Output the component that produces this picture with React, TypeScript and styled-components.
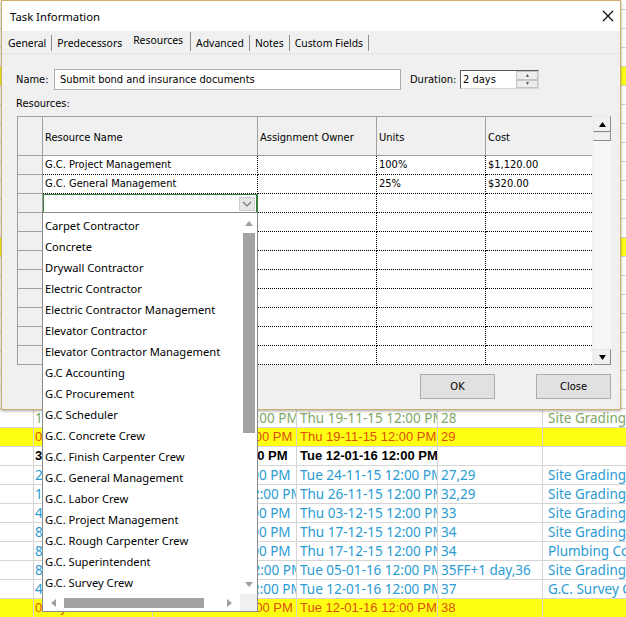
import React from 'react';
import styled, { createGlobalStyle, css } from 'styled-components';

const GlobalStyle = createGlobalStyle`
    html, body {
        margin: 0;
        padding: 0;
        background: #ffffff;
    }
    * {
        box-sizing: border-box;
    }
`;

const uiFont = `"Noto Sans", "Open Sans", sans-serif`;
const gridFont = `"DejaVu Sans Condensed", "DejaVu Sans", sans-serif`;

type Tone = 'plain' | 'green' | 'yellow' | 'bold' | 'blue';

interface SheetRowData {
    tone: Tone;
    cells: string[];
}

const sheetWidths = [34, 119, 144, 141, 105, 140];

// rows hidden behind the dialog: only their edges show
const hiddenRows: SheetRowData[] = Array.from({ length: 22 }, (_, i) => ({
    tone: i === 4 || i === 13 ? 'yellow' : 'plain',
    cells: ['', '', '', '', '', ''],
}));

const sheetRows: SheetRowData[] = [
    ...hiddenRows,
    { tone: 'green', cells: ['', '1 day', 'Thu 19-11-15 12:00 PM', 'Thu 19-11-15 12:00 PM', '28', 'Site Grading Crew'] },
    { tone: 'yellow', cells: ['', '0 days', 'Thu 19-11-15 12:00 PM', 'Thu 19-11-15 12:00 PM', '29', ''] },
    { tone: 'bold', cells: ['', '38 days', 'Fri 20-11-15 12:00 PM', 'Tue 12-01-16 12:00 PM', '', ''] },
    { tone: 'blue', cells: ['', '2 days', 'Fri 20-11-15 12:00 PM', 'Tue 24-11-15 12:00 PM', '27,29', 'Site Grading Crew'] },
    { tone: 'blue', cells: ['', '1 day', 'Wed 25-11-15 12:00 PM', 'Thu 26-11-15 12:00 PM', '32,29', 'Site Grading Crew'] },
    { tone: 'blue', cells: ['', '4 days', 'Fri 27-11-15 12:00 PM', 'Thu 03-12-15 12:00 PM', '33', 'Site Grading Crew'] },
    { tone: 'blue', cells: ['', '8 days', 'Fri 04-12-15 12:00 PM', 'Thu 17-12-15 12:00 PM', '34', 'Site Grading Crew'] },
    { tone: 'blue', cells: ['', '8 days', 'Fri 04-12-15 12:00 PM', 'Thu 17-12-15 12:00 PM', '34', 'Plumbing Contractor'] },
    { tone: 'blue', cells: ['', '8 days', 'Mon 21-12-15 12:00 PM', 'Tue 05-01-16 12:00 PM', '35FF+1 day,36', 'Site Grading Crew'] },
    { tone: 'blue', cells: ['', '4 days', 'Wed 06-01-16 12:00 PM', 'Tue 12-01-16 12:00 PM', '37', 'G.C. Survey Crew'] },
    { tone: 'yellow', cells: ['', '0 days', 'Tue 12-01-16 12:00 PM', 'Tue 12-01-16 12:00 PM', '38', ''] },
];

const tabs = ['General', 'Predecessors', 'Resources', 'Advanced', 'Notes', 'Custom Fields'];

const columns = ['', 'Resource Name', 'Assignment Owner', 'Units', 'Cost'];

const assignments = [
    ['G.C. Project Management', '', '100%', '$1,120.00'],
    ['G.C. General Management', '', '25%', '$320.00'],
];

const resourceOptions = [
    'Carpet Contractor',
    'Concrete',
    'Drywall Contractor',
    'Electric Contractor',
    'Electric Contractor Management',
    'Elevator Contractor',
    'Elevator Contractor Management',
    'G.C Accounting',
    'G.C Procurement',
    'G.C Scheduler',
    'G.C. Concrete Crew',
    'G.C. Finish Carpenter Crew',
    'G.C. General Management',
    'G.C. Labor Crew',
    'G.C. Project Management',
    'G.C. Rough Carpenter Crew',
    'G.C. Superintendent',
    'G.C. Survey Crew',
];

const Arrow = ({ dir, color = '#000', size = 7 }: { dir: 'up' | 'down' | 'left' | 'right'; color?: string; size?: number }) => {
    const h = Math.ceil(size / 2) + 1;
    const points = {
        up: `0,${h} ${size},${h} ${size / 2},0`,
        down: `0,0 ${size},0 ${size / 2},${h}`,
        left: `${h},0 ${h},${size} 0,${size / 2}`,
        right: `0,0 0,${size} ${h},${size / 2}`,
    }[dir];
    const vertical = dir === 'up' || dir === 'down';
    return (
        <svg width={vertical ? size : h} height={vertical ? h : size}>
            <polygon points={points} fill={color} />
        </svg>
    );
};

export default function App() {
    const emptyRows = 11 - assignments.length - 1;
    return (
        <Page>
            <GlobalStyle />
            <Sheet>
                {sheetRows.map((row, r) => (
                    <SheetRow key={r} $tone={row.tone}>
                        {row.cells.map((text, c) => (
                            <SheetCell key={c} $width={sheetWidths[c]}>
                                {text}
                            </SheetCell>
                        ))}
                    </SheetRow>
                ))}
            </Sheet>

            <Dialog>
                <TitleBar>
                    <span>Task Information</span>
                    <svg width="12" height="12" viewBox="0 0 12 12">
                        <path d="M1 1 L11 11 M11 1 L1 11" stroke="#000" strokeWidth="1.1" />
                    </svg>
                </TitleBar>

                <TabStrip>
                    {tabs.map((tab, i) => (
                        <Tab key={tab} $active={tab === 'Resources'} $beforeActive={tabs[i + 1] === 'Resources'}>
                            {tab}
                        </Tab>
                    ))}
                </TabStrip>

                <Panel>
                    <FieldRow>
                        <Label $width={38}>Name:</Label>
                        <TextBox>Submit bond and insurance documents</TextBox>
                        <Label $width={50} $gap={9}>
                            Duration:
                        </Label>
                        <SpinBox>
                            <span>2 days</span>
                            <Spinner>
                                <SpinButton>
                                    <Arrow dir="up" size={3} color="#555" />
                                </SpinButton>
                                <SpinButton>
                                    <Arrow dir="down" size={3} color="#555" />
                                </SpinButton>
                            </Spinner>
                        </SpinBox>
                    </FieldRow>

                    <SectionLabel>Resources:</SectionLabel>

                    <GridArea>
                        <Grid>
                            {columns.map((title, i) => (
                                <HeaderCell key={i} $last={i === columns.length - 1}>
                                    {title}
                                </HeaderCell>
                            ))}
                            {assignments.map((row, r) => (
                                <React.Fragment key={r}>
                                    <RowHead />
                                    {row.map((text, c) => (
                                        <DataCell key={c} $last={c === row.length - 1}>
                                            {text}
                                        </DataCell>
                                    ))}
                                </React.Fragment>
                            ))}
                            <RowHead />
                            <ComboCell>
                                <ComboButton>
                                    <svg width="10" height="6" viewBox="0 0 10 6">
                                        <path d="M1 1 L5 5 L9 1" stroke="#777" strokeWidth="1.2" fill="none" />
                                    </svg>
                                </ComboButton>
                            </ComboCell>
                            <DataCell />
                            <DataCell />
                            <DataCell $last />
                            {Array.from({ length: emptyRows }, (_, r) => (
                                <React.Fragment key={`e${r}`}>
                                    <RowHead />
                                    <DataCell />
                                    <DataCell />
                                    <DataCell />
                                    <DataCell $last />
                                </React.Fragment>
                            ))}
                        </Grid>
                        <VScroll>
                            <ScrollButton>
                                <Arrow dir="up" size={7} />
                            </ScrollButton>
                            <ScrollNub />
                            <ScrollTrack />
                            <ScrollButton>
                                <Arrow dir="down" size={7} />
                            </ScrollButton>
                        </VScroll>
                    </GridArea>

                    <ButtonRow>
                        <Button>OK</Button>
                        <Button>Close</Button>
                    </ButtonRow>
                </Panel>
            </Dialog>

            <DropList>
                <OptionList>
                    {resourceOptions.map((name) => (
                        <Option key={name}>{name}</Option>
                    ))}
                </OptionList>
                <ListVScroll>
                    <ListArrow $h={20}>
                        <Arrow dir="up" size={8} color="#a0a0a0" />
                    </ListArrow>
                    <ListThumbV />
                    <Spacer />
                    <ListArrow $h={20}>
                        <Arrow dir="down" size={8} color="#a0a0a0" />
                    </ListArrow>
                </ListVScroll>
                <ListHScroll>
                    <ListArrow $w={21}>
                        <Arrow dir="left" size={8} color="#a0a0a0" />
                    </ListArrow>
                    <ListThumbH />
                    <Spacer />
                    <ListArrow $w={22}>
                        <Arrow dir="right" size={8} color="#a0a0a0" />
                    </ListArrow>
                </ListHScroll>
                <ListCorner />
            </DropList>
        </Page>
    );
}

const Page = styled.div`
    position: relative;
    width: 626px;
    height: 617px;
    overflow: hidden;
    background: #ffffff;
`;

/* background project sheet */

const wideStart = css`
    & > div:nth-child(3) {
        padding-left: 0;
        text-indent: 1px;
    }
`;

const toneStyles = {
    plain: css`
        color: #000;
    `,
    green: css`
        color: #80a865;
        ${wideStart}
    `,
    yellow: css`
        background: #ffff14;
        color: #dd4e0a;
        font-family: "Liberation Sans", Arial, sans-serif;
        font-size: 13px;
    `,
    bold: css`
        color: #000;
        font-weight: bold;
        font-family: "Liberation Sans", Arial, sans-serif;
        font-size: 13px;
    `,
    blue: css`
        color: #2b9bd3;
        ${wideStart}
    `,
};

const Sheet = styled.div`
    display: flex;
    flex-direction: column;
    margin-top: -9px;
`;

const SheetRow = styled.div<{ $tone: Tone }>`
    display: flex;
    height: 19px;
    border-bottom: 1px solid #d5d5d5;
    font-family: ${uiFont};
    font-size: 13.5px;
    line-height: 18px;
    ${(props) => toneStyles[props.$tone]}
`;

const SheetCell = styled.div<{ $width: number }>`
    flex: none;
    width: ${(props) => props.$width}px;
    padding-left: 3px;
    overflow: hidden;
    white-space: nowrap;
    border-right: 1px solid #d5d5d5;
    &:first-child,
    &:nth-child(2) {
        padding-left: 1px;
    }
    &:last-child {
        padding-left: 5px;
    }
`;

/* dialog */

const Dialog = styled.div`
    position: absolute;
    left: 1px;
    top: 0;
    width: 620px;
    height: 410px;
    display: flex;
    flex-direction: column;
    background: #f0f0f0;
    border: 1px solid #cfae6a;
    box-shadow: 0 1px 3px rgba(0, 0, 0, 0.35);
    font-family: ${gridFont};
    font-size: 11px;
    color: #000;
`;

const TitleBar = styled.div`
    height: 30px;
    flex: none;
    display: flex;
    align-items: center;
    justify-content: space-between;
    padding: 0 6px 0 8px;
    background: #ffffff;
    font-family: ${uiFont};
    font-size: 11.3px;
`;

const TabStrip = styled.div`
    height: 23px;
    flex: none;
    display: flex;
    align-items: flex-start;
    padding: 4px 0 0 1px;
    border-bottom: 1px solid #e3e3e3;
    font-family: ${uiFont};
    font-size: 10.4px;
`;

const Tab = styled.div<{ $active?: boolean; $beforeActive?: boolean }>`
    height: 16px;
    line-height: 16px;
    padding: 0 5px 0 5px;
    border-right: 1px solid ${(props) => (props.$beforeActive ? 'transparent' : '#8c8c8c')};
    ${(props) =>
        props.$active &&
        css`
            height: 19px;
            margin-top: -3px;
            line-height: 17px;
            padding: 0 7px 0 5px;
        `}
`;

const Panel = styled.div`
    flex: 1;
    display: flex;
    flex-direction: column;
    padding: 15px 9px 0 14px;
`;

const FieldRow = styled.div`
    display: flex;
    align-items: center;
    height: 21px;
`;

const Label = styled.div<{ $width?: number; $gap?: number }>`
    width: ${(props) => (props.$width ? `${props.$width}px` : 'auto')};
    margin-left: ${(props) => props.$gap ?? 0}px;
    flex: none;
`;

const TextBox = styled.div`
    width: 347px;
    height: 21px;
    padding-left: 5px;
    line-height: 19px;
    background: #ffffff;
    border: 1px solid #adadad;
`;

const SpinBox = styled.div`
    position: relative;
    width: 79px;
    height: 19px;
    padding-left: 2px;
    line-height: 17px;
    background: #ffffff;
    border: 1px solid;
    border-color: #5a5a5a #d8d8d8 #d8d8d8 #5a5a5a;
`;

const Spinner = styled.div`
    position: absolute;
    right: 0;
    top: 0;
    display: flex;
    flex-direction: column;
    width: 22px;
    height: 17px;
`;

const SpinButton = styled.div`
    flex: 1;
    display: flex;
    align-items: center;
    justify-content: center;
    background: #ededed;
    border: 1px solid #c4c4c4;
`;

const SectionLabel = styled.div`
    height: 16px;
    line-height: 16px;
    margin-top: 6px;
`;

const GridArea = styled.div`
    display: flex;
    gap: 1px;
    margin: 4px 0 0 1px;
`;

const Grid = styled.div`
    display: grid;
    grid-template-columns: 25px 215px 119px 109px 106px;
    grid-auto-rows: 19px;
    grid-template-rows: 39px;
    border-top: 1px solid #a0a0a0;
    border-left: 1px solid #a0a0a0;
    background: #ffffff;
`;

const HeaderCell = styled.div<{ $last?: boolean }>`
    display: flex;
    align-items: center;
    padding: 2px 0 0 2px;
    background: #f0f0f0;
    border-right: ${(props) => (props.$last ? 'none' : '1px solid #a0a0a0')};
    border-bottom: 1px solid #a0a0a0;
`;

const RowHead = styled.div`
    background: #f0f0f0;
    border-right: 1px solid #a0a0a0;
    border-bottom: 1px solid #a0a0a0;
`;

const DataCell = styled.div<{ $last?: boolean }>`
    padding-left: 2px;
    line-height: 18px;
    white-space: nowrap;
    overflow: hidden;
    border-bottom: 1px dotted #000;
    border-right: ${(props) => (props.$last ? 'none' : '1px dotted #000')};
`;

const ComboCell = styled.div`
    display: flex;
    justify-content: flex-end;
    align-items: center;
    padding-right: 1px;
    background: #ffffff;
    border: 1px solid #3b7d3b;
    border-right-width: 2px;
`;

const ComboButton = styled.div`
    width: 16px;
    height: 14px;
    display: flex;
    align-items: center;
    justify-content: center;
    background: #e6e6e6;
    border: 1px solid #cdcdcd;
`;

const VScroll = styled.div`
    width: 18px;
    display: flex;
    flex-direction: column;
    background: #f6f6f6;
`;

const ScrollButton = styled.div`
    height: 16px;
    display: flex;
    align-items: center;
    justify-content: center;
    background: #f0f0f0;
    border: 1px solid;
    border-color: #e8e8e8 #8a8a8a #8a8a8a #e8e8e8;
`;

const ScrollNub = styled.div`
    height: 9px;
    background: #f0f0f0;
    border: 1px solid;
    border-color: #e8e8e8 #8a8a8a #8a8a8a #e8e8e8;
`;

const ScrollTrack = styled.div`
    flex: 1;
`;

const ButtonRow = styled.div`
    display: flex;
    justify-content: flex-end;
    gap: 41px;
    margin-top: 9px;
`;

const Button = styled.div`
    width: 75px;
    height: 25px;
    display: flex;
    align-items: center;
    justify-content: center;
    background: #e1e1e1;
    border: 1px solid #adadad;
`;

/* drop-down list of the combo box */

const DropList = styled.div`
    position: absolute;
    left: 42px;
    top: 212px;
    width: 216px;
    height: 400px;
    display: grid;
    grid-template-columns: 1fr 17px;
    grid-template-rows: 1fr 17px;
    background: #ffffff;
    border: 1px solid #8a8a8a;
    font-family: ${uiFont};
    font-size: 11.2px;
    color: #000;
`;

const OptionList = styled.div`
    display: flex;
    flex-direction: column;
    padding-top: 2px;
    overflow: hidden;
`;

const Option = styled.div`
    height: 21px;
    line-height: 21px;
    padding-left: 2px;
    white-space: nowrap;
`;

const ListVScroll = styled.div`
    display: flex;
    flex-direction: column;
    align-items: center;
`;

const ListHScroll = styled.div`
    display: flex;
    align-items: center;
`;

const ListArrow = styled.div<{ $w?: number; $h?: number }>`
    flex: none;
    width: ${(props) => (props.$w ? `${props.$w}px` : '100%')};
    height: ${(props) => (props.$h ? `${props.$h}px` : '100%')};
    display: flex;
    align-items: center;
    justify-content: center;
`;

const ListThumbV = styled.div`
    width: 12px;
    height: 200px;
    background: #a3a3a3;
`;

const ListThumbH = styled.div`
    width: 140px;
    height: 10px;
    background: #a3a3a3;
`;

const Spacer = styled.div`
    flex: 1;
`;

const ListCorner = styled.div`
    background: #f0f0f0;
`;
